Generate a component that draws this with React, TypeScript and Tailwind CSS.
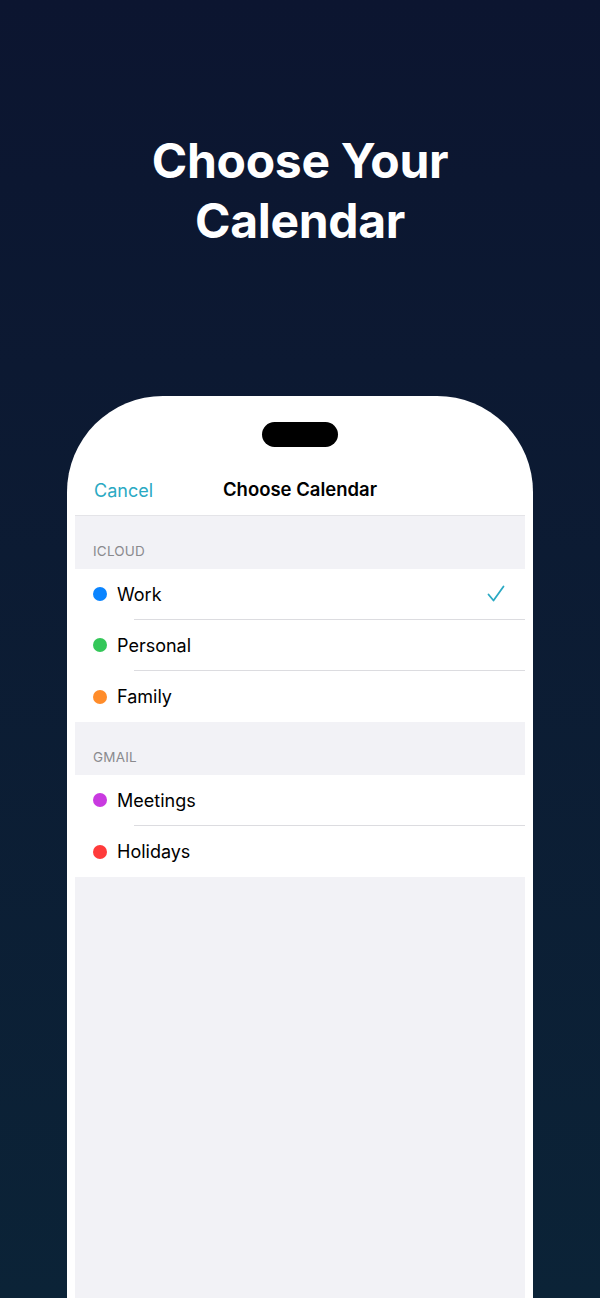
const font = { fontFamily: 'Inter, "Noto Sans", sans-serif' };

interface Calendar {
  name: string;
  color: string;
  selected?: boolean;
}

const sections: { title: string; items: Calendar[] }[] = [
  {
    title: "ICLOUD",
    items: [
      { name: "Work", color: "bg-[#0a84ff]", selected: true },
      { name: "Personal", color: "bg-[#34c759]" },
      { name: "Family", color: "bg-[#ff8c2a]" },
    ],
  },
  {
    title: "GMAIL",
    items: [
      { name: "Meetings", color: "bg-[#c93ae0]" },
      { name: "Holidays", color: "bg-[#ff3b3b]" },
    ],
  },
];

function Check() {
  return (
    <svg width="18" height="18" viewBox="0 0 18 18" fill="none">
      <path d="M1.5 9.5 L6.5 15.5 L16.5 1.5" stroke="#2aa9c3" strokeWidth="1.8" strokeLinecap="round" strokeLinejoin="round" />
    </svg>
  );
}

export default function App() {
  return (
    <div
      className="w-[600px] h-[1298px] overflow-hidden flex flex-col items-center bg-gradient-to-b from-[#0c1530] to-[#0b2337]"
      style={font}
    >
      <h1 className="mt-[131px] text-white font-bold text-[48px] leading-[60px] text-center tracking-[-0.3px]">
        Choose Your
        <br />
        Calendar
      </h1>

      {/* phone */}
      <div className="mt-[145px] w-[466px] flex-1 bg-white rounded-t-[96px] px-2 flex flex-col">
        <div className="flex justify-center pt-[26px]">
          <div className="w-[76px] h-[25px] rounded-full bg-black" />
        </div>
        <div className="relative h-[68px] flex items-center justify-center pt-[18px]">
          <span className="absolute left-[19px] text-[18px] text-[#2aa9c3]">Cancel</span>
          <span className="text-[18.5px] font-semibold text-black">Choose Calendar</span>
        </div>
        <div className="flex-1 bg-[#f2f2f6] border-t border-[#e4e4e8]">
          {sections.map((section) => (
            <div key={section.title}>
              <div className="h-[53px] flex items-end pb-[8px] pl-[18px] text-[13.5px] text-[#8a8a8e] tracking-[0.2px]">
                {section.title}
              </div>
              <div className="bg-white">
                {section.items.map((item, i) => {
                  const last = i === section.items.length - 1;
                  return (
                    <div key={item.name}>
                      <div className={`${last ? "h-[51px]" : "h-[50px]"} flex items-center pl-[18px] pr-[20px]`}>
                        <span className={`w-[14px] h-[14px] rounded-full ${item.color}`} />
                        <span className="ml-[10px] flex-1 text-[18px] text-black">{item.name}</span>
                        {item.selected && <Check />}
                      </div>
                      {!last && <div className="ml-[59px] h-px bg-[#dcdce0]" />}
                    </div>
                  );
                })}
              </div>
            </div>
          ))}
        </div>
      </div>
    </div>
  );
}
